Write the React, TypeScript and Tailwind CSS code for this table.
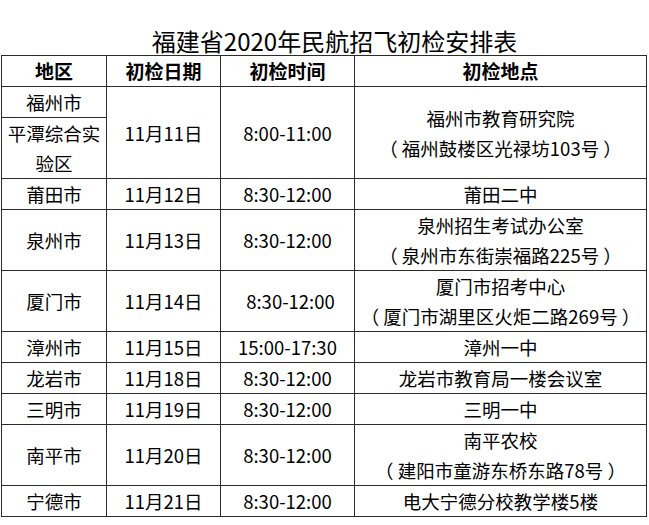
const rows: {
  city: string;
  date: string;
  time: string;
  place: string[];
  tall?: boolean;
  timeClass?: string;
}[] = [
  { city: "莆田市", date: "11月12日", time: "8:30-12:00", place: ["莆田二中"] },
  {
    city: "泉州市",
    date: "11月13日",
    time: "8:30-12:00",
    place: ["泉州招生考试办公室", "（ 泉州市东街崇福路225号 ）"],
    tall: true,
  },
  {
    city: "厦门市",
    date: "11月14日",
    time: "8:30-12:00",
    place: ["厦门市招考中心", "（ 厦门市湖里区火炬二路269号 ）"],
    tall: true,
    timeClass: "pl-[6px]",
  },
  { city: "漳州市", date: "11月15日", time: "15:00-17:30", place: ["漳州一中"] },
  { city: "龙岩市", date: "11月18日", time: "8:30-12:00", place: ["龙岩市教育局一楼会议室"] },
  { city: "三明市", date: "11月19日", time: "8:30-12:00", place: ["三明一中"] },
  {
    city: "南平市",
    date: "11月20日",
    time: "8:30-12:00",
    place: ["南平农校", "（ 建阳市童游东桥东路78号 ）"],
    tall: true,
  },
  { city: "宁德市", date: "11月21日", time: "8:30-12:00", place: ["电大宁德分校教学楼5楼"] },
];

const cell = "border border-[#2b2b2b] p-0 text-center align-middle";

export default function App() {
  return (
    <div className="w-[649px] h-[525px] bg-white text-black font-['Noto_Sans_CJK_SC',sans-serif]">
      <div className="h-[55px] pt-[28px] pl-[20px] text-center text-[24px] leading-[26px]">
        福建省2020年民航招飞初检安排表
      </div>
      <table className="ml-[1px] w-[645px] table-fixed border-collapse text-[18.5px] leading-[30px]">
        <colgroup>
          <col className="w-[105px]" />
          <col className="w-[114px]" />
          <col className="w-[134px]" />
          <col className="w-[292px]" />
        </colgroup>
        <thead>
          <tr className="h-[31px] text-[19px] font-bold">
            <th className={cell}>地区</th>
            <th className={cell}>初检日期</th>
            <th className={cell}>初检时间</th>
            <th className={cell}>初检地点</th>
          </tr>
        </thead>
        <tbody>
          <tr className="h-[31px]">
            <td className={cell}>福州市</td>
            <td className={cell} rowSpan={2}>11月11日</td>
            <td className={cell} rowSpan={2}>8:00-11:00</td>
            <td className={cell} rowSpan={2}>
              <div>福州市教育研究院</div>
              <div>（ 福州鼓楼区光禄坊103号 ）</div>
            </td>
          </tr>
          <tr className="h-[61px]">
            <td className={`${cell} px-[5px]`}>平潭综合实验区</td>
          </tr>
          {rows.map((r) => (
            <tr key={r.city} className={r.tall ? "h-[61px]" : "h-[31px]"}>
              <td className={cell}>{r.city}</td>
              <td className={cell}>{r.date}</td>
              <td className={`${cell} ${r.timeClass ?? ""}`}>{r.time}</td>
              <td className={cell}>
                {r.place.map((p) => (
                  <div key={p}>{p}</div>
                ))}
              </td>
            </tr>
          ))}
        </tbody>
      </table>
    </div>
  );
}
